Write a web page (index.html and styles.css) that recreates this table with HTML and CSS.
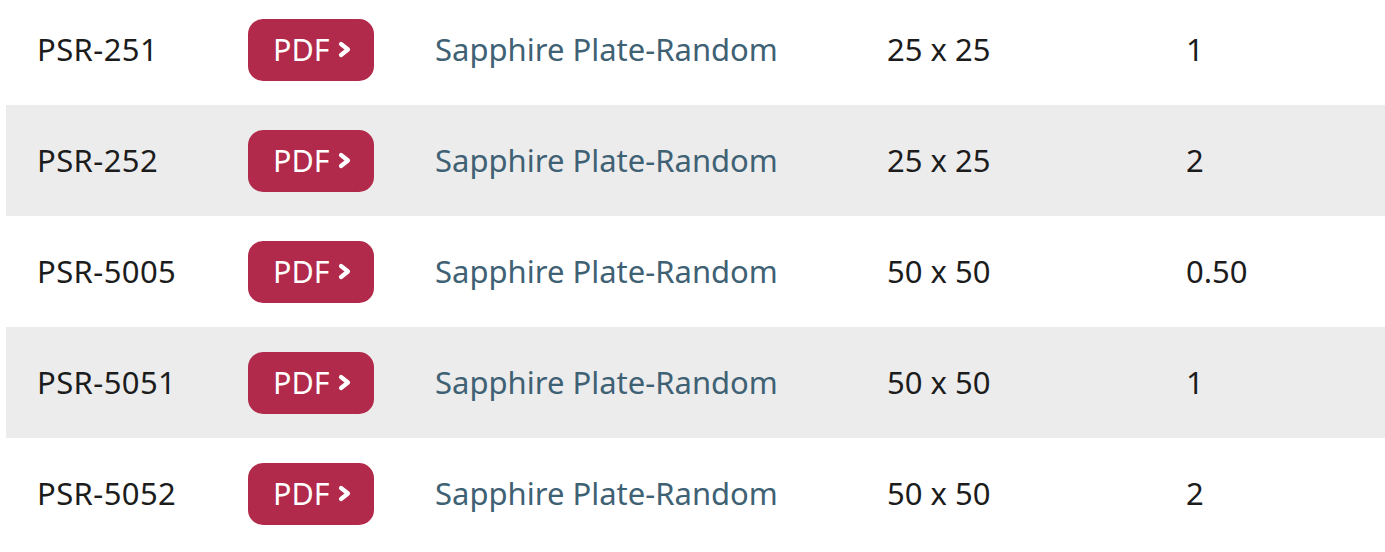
FILE: index.html
```html
<!DOCTYPE html>
<html>
<head>
<meta charset="utf-8">
<link rel="stylesheet" href="styles.css">
</head>
<body>
<div class="wrap">
<table class="products">
  <colgroup>
    <col class="c-code"><col class="c-pdf"><col class="c-name"><col class="c-size"><col class="c-thick">
  </colgroup>
  <tbody>
    <tr>
      <td class="code">PSR-251</td>
      <td><a class="pdf" href="#">PDF<svg class="chev" width="13" height="17" viewBox="0 0 13 17"><polyline points="3,3 10,8.5 3,14"/></svg></a></td>
      <td class="name">Sapphire Plate-Random</td>
      <td>25 x 25</td>
      <td>1</td>
    </tr>
    <tr class="alt">
      <td class="code">PSR-252</td>
      <td><a class="pdf" href="#">PDF<svg class="chev" width="13" height="17" viewBox="0 0 13 17"><polyline points="3,3 10,8.5 3,14"/></svg></a></td>
      <td class="name">Sapphire Plate-Random</td>
      <td>25 x 25</td>
      <td>2</td>
    </tr>
    <tr>
      <td class="code">PSR-5005</td>
      <td><a class="pdf" href="#">PDF<svg class="chev" width="13" height="17" viewBox="0 0 13 17"><polyline points="3,3 10,8.5 3,14"/></svg></a></td>
      <td class="name">Sapphire Plate-Random</td>
      <td>50 x 50</td>
      <td>0.50</td>
    </tr>
    <tr class="alt">
      <td class="code">PSR-5051</td>
      <td><a class="pdf" href="#">PDF<svg class="chev" width="13" height="17" viewBox="0 0 13 17"><polyline points="3,3 10,8.5 3,14"/></svg></a></td>
      <td class="name">Sapphire Plate-Random</td>
      <td>50 x 50</td>
      <td>1</td>
    </tr>
    <tr>
      <td class="code">PSR-5052</td>
      <td><a class="pdf" href="#">PDF<svg class="chev" width="13" height="17" viewBox="0 0 13 17"><polyline points="3,3 10,8.5 3,14"/></svg></a></td>
      <td class="name">Sapphire Plate-Random</td>
      <td>50 x 50</td>
      <td>2</td>
    </tr>
  </tbody>
</table>
</div>
</body>
</html>
```
FILE: styles.css
```css
html, body {
  margin: 0;
  padding: 0;
  background: #ffffff;
  overflow: hidden;
}
.wrap {
  padding-left: 6px;
  margin-top: -6px;
}
.products {
  width: 100%;
  border-collapse: collapse;
  table-layout: fixed;
  font-family: "Noto Sans", "Open Sans", sans-serif;
  font-size: 31px;
  color: #1c1c1c;
}
.c-code { width: 211px; }
.c-pdf { width: 187px; }
.c-name { width: 452px; }
.c-size { width: 299px; }
.products td {
  height: 111px;
  padding: 0 0 0 31px;
  box-sizing: border-box;
  vertical-align: middle;
  white-space: nowrap;
  line-height: 1;
}
.products td.code {
  letter-spacing: 0.4px;
}
.products tr.alt td {
  background: #ececec;
}
.products td.name {
  color: #3f6174;
}
.pdf {
  display: inline-flex;
  align-items: center;
  box-sizing: border-box;
  width: 126px;
  height: 62px;
  padding: 0 0 0 25px;
  border-radius: 15px;
  background: #b12a4b;
  color: #ffffff;
  text-decoration: none;
  font-size: 30.5px;
}
.chev {
  margin-left: 8px;
  fill: none;
  stroke: #ffffff;
  stroke-width: 4.2;
  stroke-linecap: round;
  stroke-linejoin: round;
}
```
